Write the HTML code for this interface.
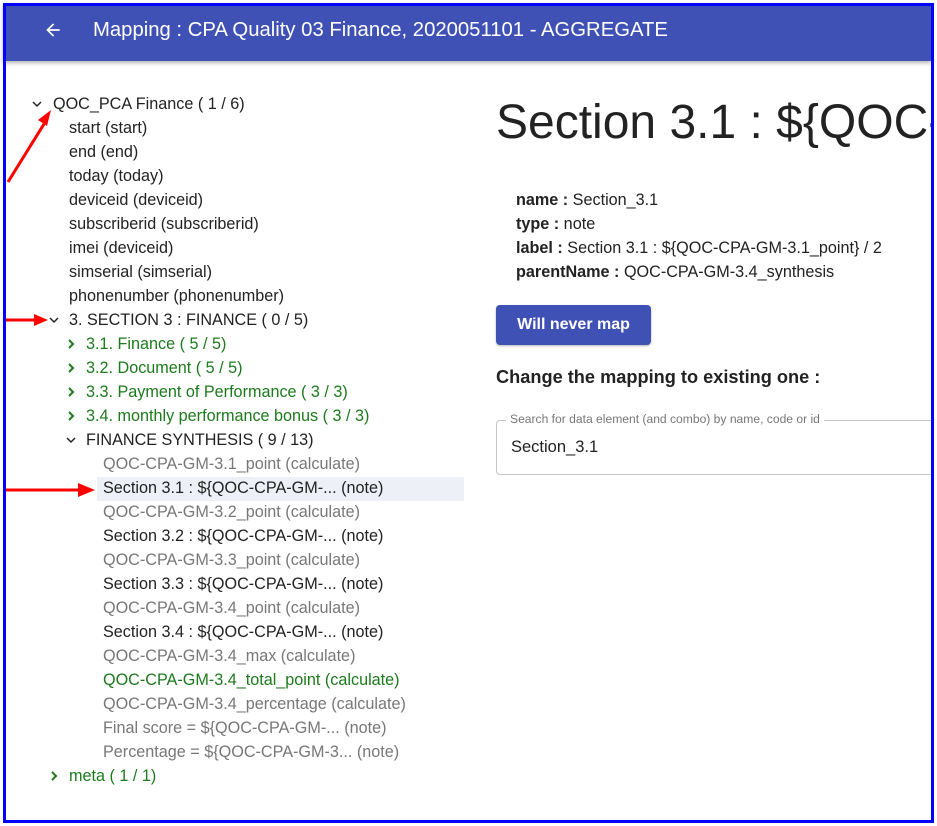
<!DOCTYPE html>
<html><head><meta charset="utf-8"><style>
*{margin:0;padding:0;box-sizing:border-box}
body{width:937px;height:826px;background:#fff;font-family:"Liberation Sans",sans-serif;position:relative;overflow:hidden}
.frame{position:absolute;left:3px;top:3px;width:931px;height:820px;border:3px solid #0000ff;z-index:5;pointer-events:none}
.hdr{position:absolute;left:3px;top:3px;width:928px;height:58px;background:#3f51b5;box-shadow:0 2px 4px rgba(0,0,0,.3);color:#fff}
.hdr .t{position:absolute;left:90px;top:16px;font-size:20.3px}
.r{position:absolute;font-size:16.2px;line-height:24px;white-space:nowrap;color:#222}
.g{color:#1c7a1c}.y{color:#777}
.hl{position:absolute;left:97px;top:477px;width:367px;height:24px;background:#eef0f8}
.clip{position:absolute;left:0;top:0;width:931px;height:826px;overflow:hidden}
.h1{position:absolute;left:496px;top:95px;font-size:48px;color:#222;white-space:nowrap}
.d{position:absolute;left:516px;font-size:16.2px;color:#222;line-height:24px;white-space:nowrap}
.btn{position:absolute;left:496px;top:305px;width:155px;height:40px;background:#3f51b5;border-radius:4px;color:#fff;font-weight:bold;font-size:16px;text-align:center;line-height:40px;box-shadow:0 1px 2px rgba(0,0,0,.3)}
.h2{position:absolute;left:496px;top:367px;font-size:18.2px;font-weight:bold;color:#222;white-space:nowrap}
.fs{position:absolute;left:496px;top:420px;width:450px;height:55px;border:1px solid #c4c4c4;border-radius:4px}
.lg{position:absolute;left:506px;top:412px;background:#fff;padding:0 4px;font-size:12.1px;color:#777;white-space:nowrap}
.val{position:absolute;left:511px;top:438px;font-size:16.5px;color:#222}
</style></head><body>
<div class="hdr"><svg style="position:absolute;left:40px;top:17px" width="20" height="20" viewBox="0 0 24 24"><path d="M20 11H7.8l5.6-5.6L12 4l-8 8 8 8 1.4-1.4L7.8 13H20z" fill="#fff"/></svg><div class="t">Mapping : CPA Quality 03 Finance, 2020051101 - AGGREGATE</div></div>
<div class="hl"></div>
<svg style="position:absolute;left:0;top:0" width="470" height="826">
<g fill="none" stroke="#222" stroke-width="1.5"><path d="M33 102l4 4 4-4"/><path d="M50 318l4 4 4-4"/><path d="M67 438l4 4 4-4"/></g>
<g fill="none" stroke="#1c7a1c" stroke-width="2"><path d="M69 340l4 4-4 4"/><path d="M69 364l4 4-4 4"/><path d="M69 388l4 4-4 4"/><path d="M69 412l4 4-4 4"/><path d="M52 772l4 4-4 4"/></g>
<g stroke="#f00" stroke-width="3" fill="#f00"><path d="M8 182L44 124"/><path d="M51 110l-13 10 9 6z" stroke="none"/>
<path d="M6 320H35"/><path d="M48 320l-14-6v12z" stroke="none"/>
<path d="M6 490H80"/><path d="M95 490l-17-7v14z" stroke="none"/></g>
</svg>
<div class="r" style="left:53px;top:92px">QOC_PCA Finance ( 1 / 6)</div>
<div class="r" style="left:69px;top:116px">start (start)</div>
<div class="r" style="left:69px;top:140px">end (end)</div>
<div class="r" style="left:69px;top:164px">today (today)</div>
<div class="r" style="left:69px;top:188px">deviceid (deviceid)</div>
<div class="r" style="left:69px;top:212px">subscriberid (subscriberid)</div>
<div class="r" style="left:69px;top:236px">imei (deviceid)</div>
<div class="r" style="left:69px;top:260px">simserial (simserial)</div>
<div class="r" style="left:69px;top:284px">phonenumber (phonenumber)</div>
<div class="r" style="left:69px;top:308px">3. SECTION 3 : FINANCE ( 0 / 5)</div>
<div class="r g" style="left:86px;top:332px">3.1. Finance ( 5 / 5)</div>
<div class="r g" style="left:86px;top:356px">3.2. Document ( 5 / 5)</div>
<div class="r g" style="left:86px;top:380px">3.3. Payment of Performance ( 3 / 3)</div>
<div class="r g" style="left:86px;top:404px">3.4. monthly performance bonus ( 3 / 3)</div>
<div class="r" style="left:86px;top:428px">FINANCE SYNTHESIS ( 9 / 13)</div>
<div class="r y" style="left:103px;top:452px">QOC-CPA-GM-3.1_point (calculate)</div>
<div class="r" style="left:103px;top:476px">Section 3.1 : ${QOC-CPA-GM-... (note)</div>
<div class="r y" style="left:103px;top:500px">QOC-CPA-GM-3.2_point (calculate)</div>
<div class="r" style="left:103px;top:524px">Section 3.2 : ${QOC-CPA-GM-... (note)</div>
<div class="r y" style="left:103px;top:548px">QOC-CPA-GM-3.3_point (calculate)</div>
<div class="r" style="left:103px;top:572px">Section 3.3 : ${QOC-CPA-GM-... (note)</div>
<div class="r y" style="left:103px;top:596px">QOC-CPA-GM-3.4_point (calculate)</div>
<div class="r" style="left:103px;top:620px">Section 3.4 : ${QOC-CPA-GM-... (note)</div>
<div class="r y" style="left:103px;top:644px">QOC-CPA-GM-3.4_max (calculate)</div>
<div class="r g" style="left:103px;top:668px">QOC-CPA-GM-3.4_total_point (calculate)</div>
<div class="r y" style="left:103px;top:692px">QOC-CPA-GM-3.4_percentage (calculate)</div>
<div class="r y" style="left:103px;top:716px">Final score = ${QOC-CPA-GM-... (note)</div>
<div class="r y" style="left:103px;top:740px">Percentage = ${QOC-CPA-GM-3... (note)</div>
<div class="r g" style="left:69px;top:764px">meta ( 1 / 1)</div>
<div class="clip">
<div class="h1">Section 3.1 : ${QOC-CPA-GM</div>
<div class="d" style="top:188px"><b>name :</b> Section_3.1</div>
<div class="d" style="top:212px"><b>type :</b> note</div>
<div class="d" style="top:236px"><b>label :</b> Section 3.1 : ${QOC-CPA-GM-3.1_point} / 2</div>
<div class="d" style="top:260px"><b>parentName :</b> QOC-CPA-GM-3.4_synthesis</div>
<div class="btn">Will never map</div>
<div class="h2">Change the mapping to existing one :</div>
<div class="fs"></div>
<div class="lg">Search for data element (and combo) by name, code or id</div>
<div class="val">Section_3.1</div>
</div>
<div class="frame"></div>
</body></html>
